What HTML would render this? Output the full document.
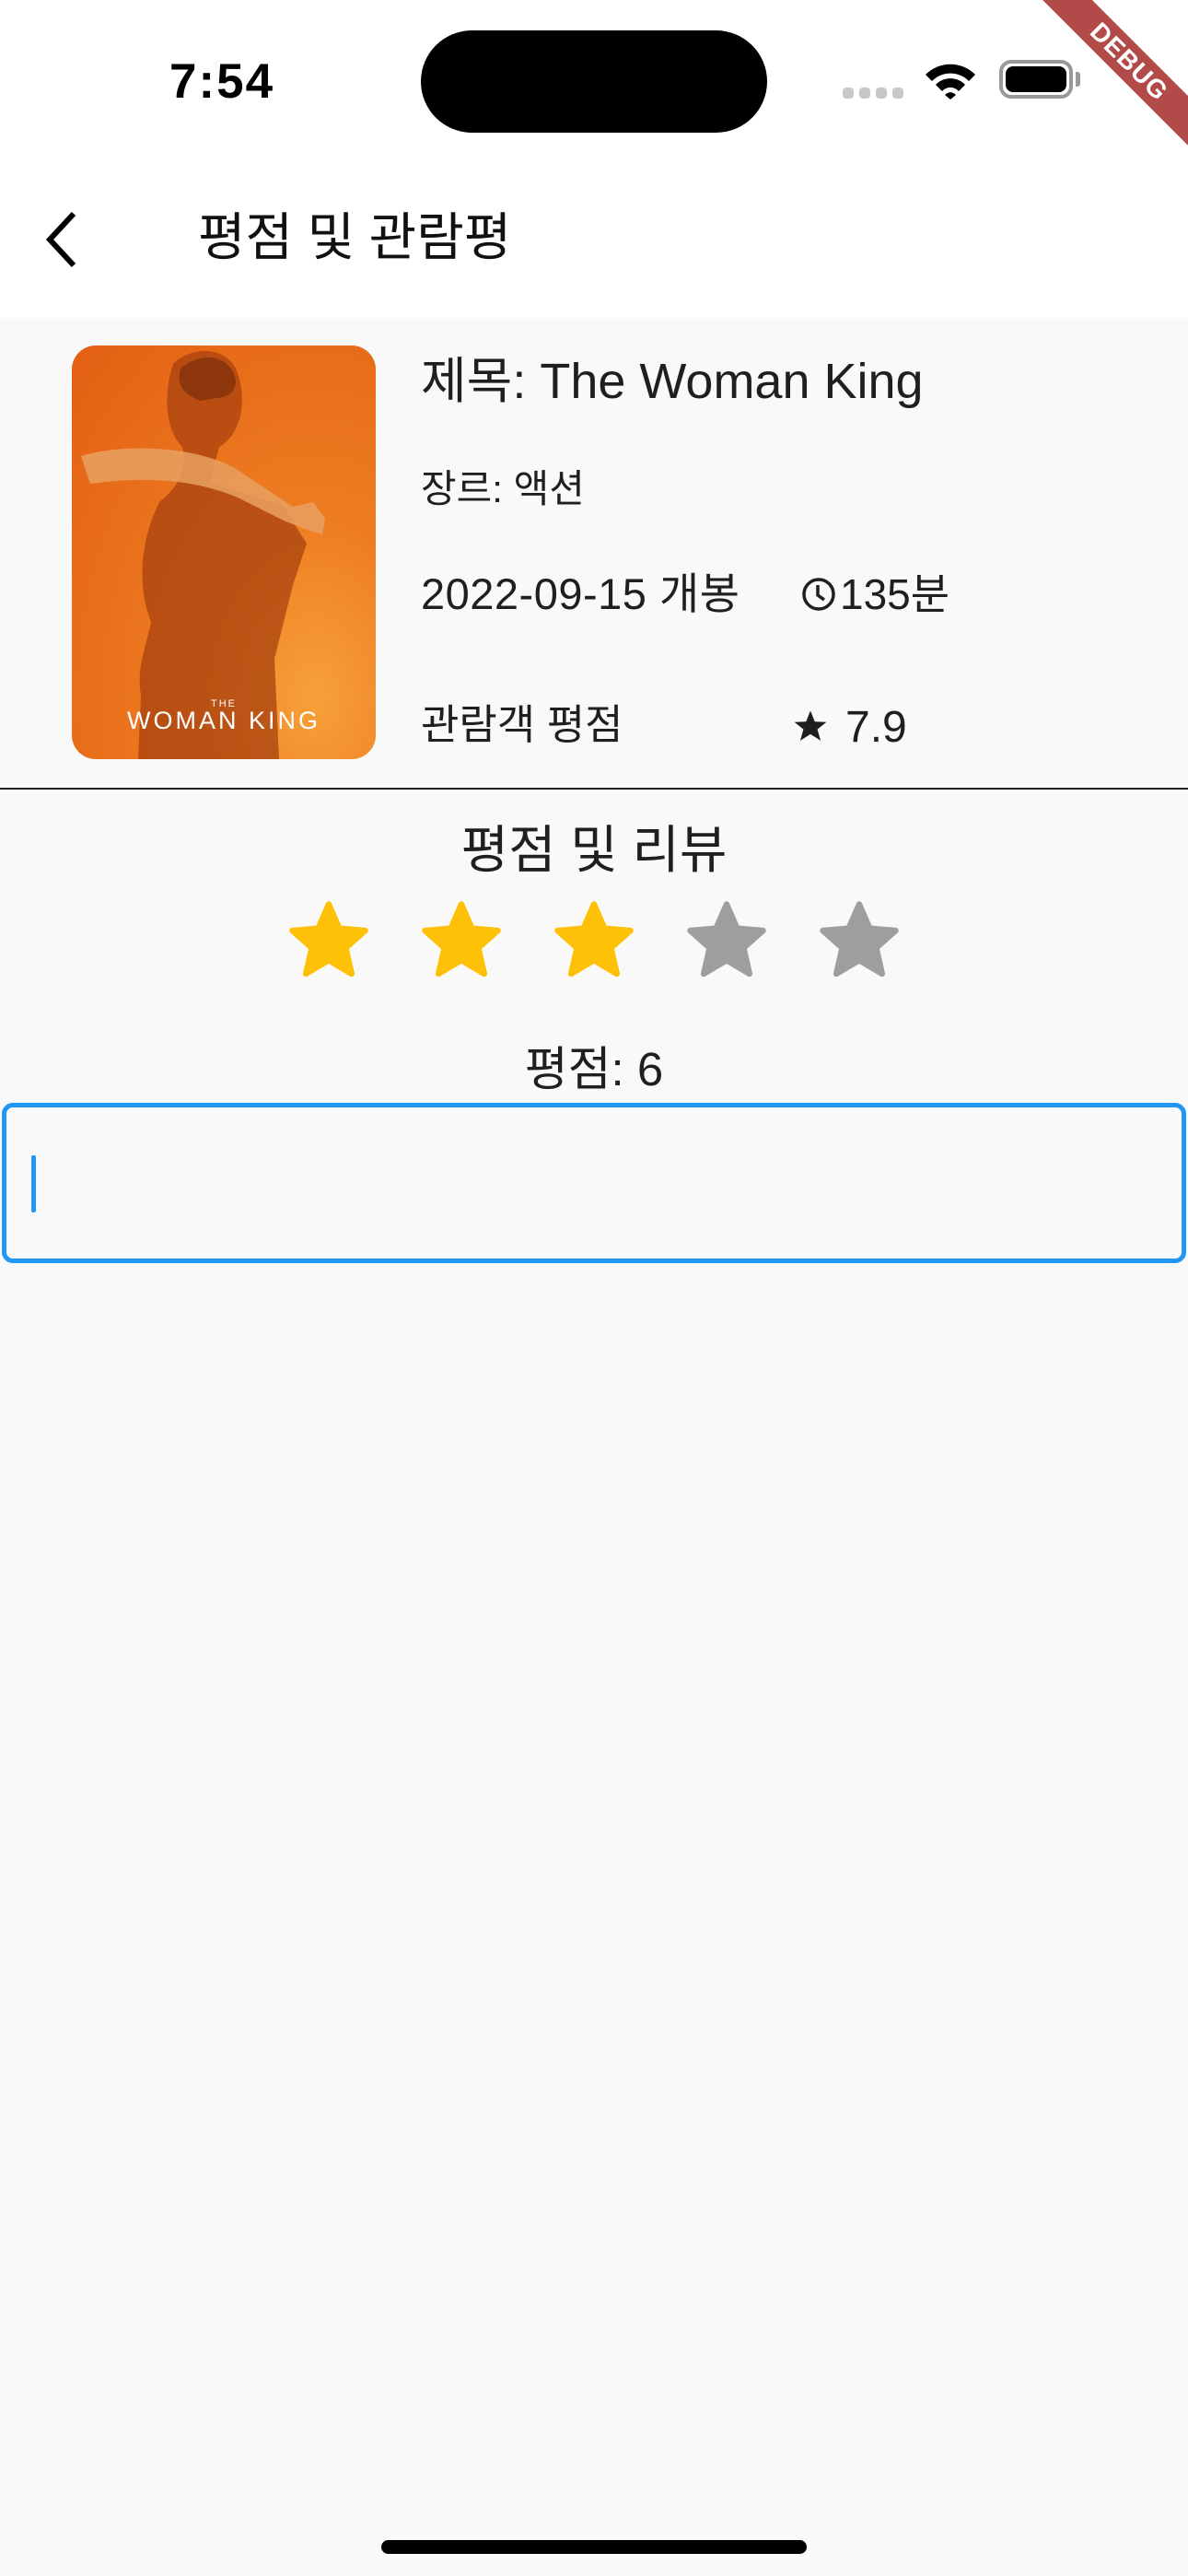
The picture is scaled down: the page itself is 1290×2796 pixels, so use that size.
<!DOCTYPE html>
<html><head><meta charset="utf-8">
<style>
*{margin:0;padding:0;box-sizing:border-box}
html,body{width:1290px;height:2796px;overflow:hidden}
body{background:#f9f9f9;font-family:"Liberation Sans","Noto Sans CJK KR",sans-serif;color:#1f1f1f;position:relative}
.abs{position:absolute;white-space:nowrap}
.hdr{position:absolute;left:0;top:0;width:1290px;height:345px;background:#fff}
</style></head><body>
<div class="hdr"></div>
<!-- status bar -->
<div class="abs" style="left:184px;top:58px;font-size:53px;font-weight:bold;color:#000;letter-spacing:2px">7:54</div>
<div class="abs" style="left:457px;top:33px;width:376px;height:111px;background:#000;border-radius:56px"></div>
<div class="abs" style="left:915px;top:95px;width:12px;height:12px;background:#c8c8c8;border-radius:4px"></div>
<div class="abs" style="left:933px;top:95px;width:12px;height:12px;background:#c8c8c8;border-radius:4px"></div>
<div class="abs" style="left:951px;top:95px;width:12px;height:12px;background:#c8c8c8;border-radius:4px"></div>
<div class="abs" style="left:969px;top:95px;width:12px;height:12px;background:#c8c8c8;border-radius:4px"></div>
<svg class="abs" style="left:1002px;top:64px" width="60" height="44" viewBox="0 0 60 44">
<path d="M3 17 A38 38 0 0 1 57 17 L50 24 A28 28 0 0 0 10 24 Z" fill="#000"/>
<path d="M14 28 A22 22 0 0 1 46 28 L39 35 A12 12 0 0 0 21 35 Z" fill="#000"/>
<path d="M24 39 A8 8 0 0 1 36 39 L30 44 Z" fill="#000"/>
</svg>
<div class="abs" style="left:1085px;top:65px;width:80px;height:42px;border:4px solid #999;border-radius:13px"></div>
<div class="abs" style="left:1092px;top:72px;width:66px;height:28px;background:#000;border-radius:8px"></div>
<div class="abs" style="left:1168px;top:78px;width:5px;height:16px;background:#999;border-radius:0 3px 3px 0"></div>
<!-- debug banner -->
<div class="abs" style="left:1016px;top:48px;width:420px;height:38px;background:#b34a4a;transform:rotate(45deg);text-align:center;color:#fff;font-weight:bold;font-size:28px;line-height:38px;letter-spacing:1px">DEBUG</div>
<!-- app bar -->
<svg class="abs" style="left:44px;top:228px" width="44" height="64" viewBox="0 0 44 64"><path d="M36 4 L10 32 L36 60" fill="none" stroke="#000" stroke-width="6"/></svg>
<div class="abs" style="left:215px;top:226px;font-size:56px;line-height:64px;color:#111">평점 및 관람평</div>
<!-- poster -->
<div class="abs" style="left:78px;top:375px;width:330px;height:449px;border-radius:26px;overflow:hidden;background:radial-gradient(ellipse at 80% 85%,#f7a13a 0%,#ee7d22 35%,#e35f12 100%)">
<svg width="330" height="449" viewBox="0 0 330 449" style="position:absolute;left:0;top:0">
<path d="M110 20 C130 0 170 0 180 30 C190 60 185 95 160 110 L150 150 C190 160 215 170 230 175 L255 215 L240 260 L230 300 L220 340 L225 449 L72 449 L75 380 C70 350 80 330 86 300 C70 260 75 210 95 170 C120 150 125 130 120 110 C100 90 100 50 110 20 Z" fill="#a8420f" opacity="0.75"/>
<path d="M10 120 C60 105 140 110 180 135 L240 175 L262 170 L275 188 L272 205 L255 200 L230 190 L180 165 C120 140 60 145 20 150 Z" fill="#e8a060" opacity="0.85"/>
<path d="M118 25 C140 5 175 10 178 40 C175 60 160 55 140 60 C125 55 112 45 118 25 Z" fill="#7a2e0a" opacity="0.7"/>
</svg>
<div style="position:absolute;left:0;width:330px;top:383px;text-align:center;color:#fff;font-size:11px;letter-spacing:2px">THE</div>
<div style="position:absolute;left:0;width:330px;top:392px;text-align:center;color:#fff;font-size:27px;letter-spacing:3px">WOMAN KING</div>
</div>
<!-- info -->
<div class="abs" style="left:457px;top:380px;font-size:54px;line-height:68px">제목: The Woman King</div>
<div class="abs" style="left:457px;top:506px;font-size:42px;line-height:50px">장르: 액션</div>
<div class="abs" style="left:457px;top:617px;font-size:47px;line-height:56px;letter-spacing:0.5px">2022-09-15 개봉</div>
<svg class="abs" style="left:870px;top:626px" width="38" height="38" viewBox="0 0 38 38"><circle cx="19" cy="19" r="16" fill="none" stroke="#1f1f1f" stroke-width="3.5"/><path d="M18 9 V20 L25 25" fill="none" stroke="#1f1f1f" stroke-width="3.5"/></svg>
<div class="abs" style="left:912px;top:617px;font-size:46px;line-height:56px">135분</div>
<div class="abs" style="left:457px;top:759px;font-size:45px;line-height:56px">관람객 평점</div>
<svg class="abs" style="left:861px;top:769px" width="38" height="38" viewBox="0 0 24 24"><path d="M12 1.5 L15 9 L23 9.3 L16.8 14.3 L19 22 L12 17.6 L5 22 L7.2 14.3 L1 9.3 L9 9 Z" fill="#1f1f1f"/></svg>
<div class="abs" style="left:918px;top:762px;font-size:48px;line-height:56px">7.9</div>
<!-- divider -->
<div class="abs" style="left:0;top:855px;width:1290px;height:2px;background:#222"></div>
<div class="abs" style="left:0;width:1290px;top:888px;text-align:center;font-size:56px;line-height:70px">평점 및 리뷰</div>
<!-- stars -->
<svg class="abs" style="left:0;top:970px" width="1290" height="100" viewBox="0 0 1290 100">
<defs><g id="s"><path transform="scale(0.92)" d="M0 -44 L12.5 -15.5 L43 -13 L20 7.5 L27 38 L0 22 L-27 38 L-20 7.5 L-43 -13 L-12.5 -15.5 Z" stroke-linejoin="round" stroke-width="7"/></g></defs>
<use href="#s" x="357" y="52" fill="#ffc107" stroke="#ffc107"/>
<use href="#s" x="501" y="52" fill="#ffc107" stroke="#ffc107"/>
<use href="#s" x="645" y="52" fill="#ffc107" stroke="#ffc107"/>
<use href="#s" x="789" y="52" fill="#9e9e9e" stroke="#9e9e9e"/>
<use href="#s" x="933" y="52" fill="#9e9e9e" stroke="#9e9e9e"/>
</svg>
<div class="abs" style="left:0;width:1290px;top:1131px;text-align:center;font-size:51px;line-height:60px">평점: 6</div>
<!-- text field -->
<div class="abs" style="left:2px;top:1197px;width:1286px;height:174px;border:5px solid #2196f3;border-radius:12px"></div>
<div class="abs" style="left:34px;top:1254px;width:5px;height:62px;background:#2196f3;border-radius:2px"></div>
<!-- home indicator -->
<div class="abs" style="left:414px;top:2757px;width:462px;height:15px;background:#000;border-radius:8px"></div>
</body></html>
